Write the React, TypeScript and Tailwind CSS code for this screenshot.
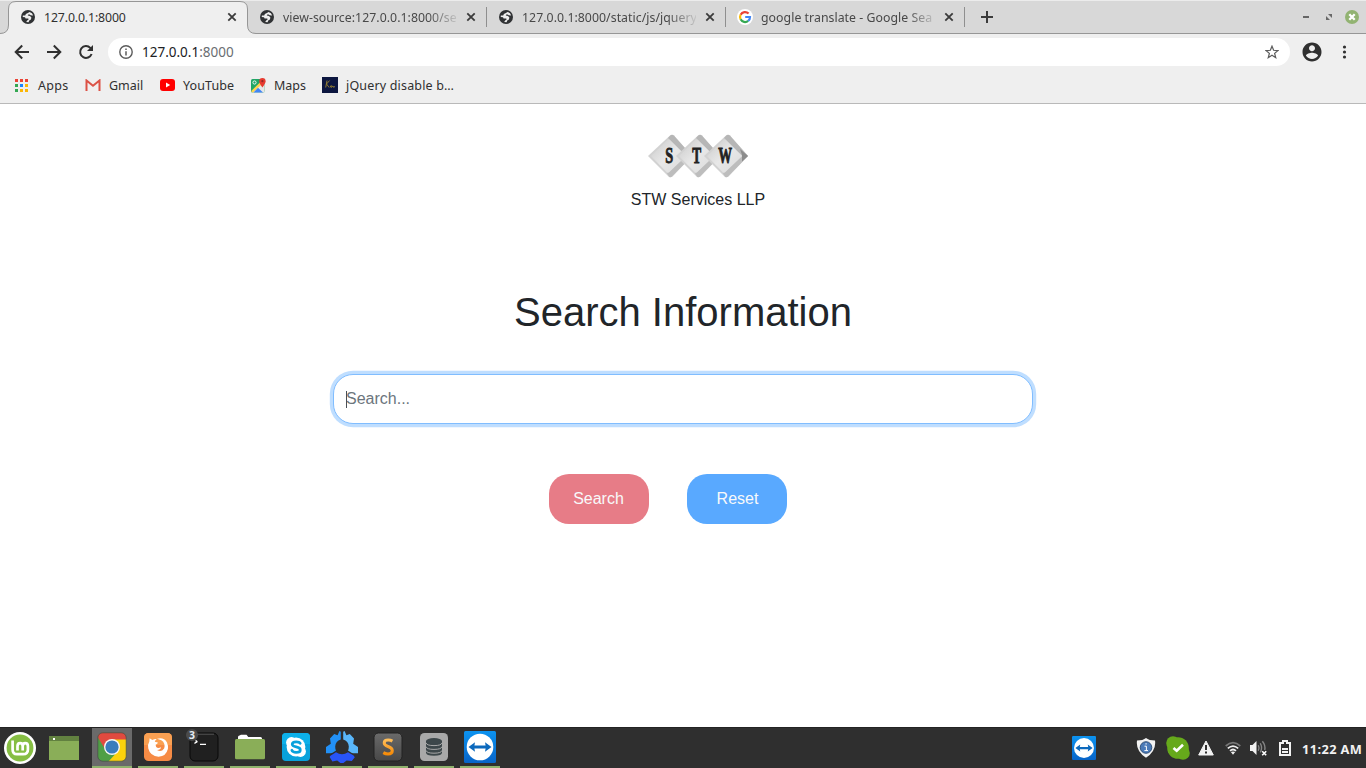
import type { ReactNode } from 'react';

const Globe = () => (
  <svg width="14" height="14" viewBox="0 0 14 14" className="shrink-0">
    <circle cx="7" cy="7" r="7" fill="#303234" />
    <path d="M8.6 2 Q11.4 2.6 12.2 5.4 L9.6 5.2 L8.8 4.4 L7.2 4.4 L6.8 5.6 L9 6 L10.4 7.6 L9.9 9.6 L8.2 10.4 L7.6 12.2 L5.2 12 L6.2 10.4 L7.6 9.6 L7.3 8.6 L4.6 8.4 L4 7.2 L1.7 7 L1.9 5.6 L4.2 5.6 L4.9 3.9 L6.9 3.1 Z" fill="#eeeeee" />
  </svg>
);

const GoogleG = () => (
  <svg width="16" height="16" viewBox="0 0 16 16" className="-mx-px shrink-0">
    <circle cx="8" cy="8" r="8" fill="#fff" />
    <g fill="none" strokeWidth="2.2">
      <path d="M11.6 4.6 A5 5 0 0 0 3.6 5.7" stroke="#ea4335" />
      <path d="M3.6 5.7 A5 5 0 0 0 3.6 10.3" stroke="#fbbc05" />
      <path d="M3.6 10.3 A5 5 0 0 0 11.2 11.9" stroke="#34a853" />
      <path d="M11.2 11.9 A5 5 0 0 0 13 8 H8.2" stroke="#4285f4" />
    </g>
  </svg>
);

const CloseX = () => (
  <svg width="10" height="10" viewBox="0 0 10 10" className="ml-[9px] shrink-0">
    <path d="M1.3 1.3 L8.7 8.7 M8.7 1.3 L1.3 8.7" stroke="#3b3b3b" strokeWidth="1.8" />
  </svg>
);

function Tab({ icon, title, active }: { icon: ReactNode; title: string; active?: boolean }) {
  return (
    <div className="relative flex h-[34px] w-[239px] shrink-0 items-center pl-[13px]">
      {icon}
      <div
        className={
          'ml-[9px] w-[174px] overflow-hidden whitespace-nowrap pt-px text-[12.3px] leading-[18px] ' +
          (active
            ? 'tracking-[-0.13px] text-[#303030]'
            : 'tracking-[0.04px] text-[#484848] [mask-image:linear-gradient(to_right,black_145px,transparent_178px)]')
        }
      >
        {title}
      </div>
      <CloseX />
      {!active && <div className="-mr-px ml-auto h-5 w-px bg-[#8f8f8f]" />}
    </div>
  );
}

const TeamViewer = ({ size }: { size: number }) => (
  <svg width={size} height={size} viewBox="0 0 32 32">
    <defs>
      <linearGradient id="tv" x1="0" y1="0" x2="0" y2="1">
        <stop offset="0" stopColor="#0c93f0" />
        <stop offset="1" stopColor="#0764c8" />
      </linearGradient>
    </defs>
    <rect width="32" height="32" rx="1.5" fill="url(#tv)" />
    <circle cx="16" cy="16" r="13.3" fill="#fff" />
    <path d="M4.5 16 L11 11.2 L10.4 14.5 H21.6 L21 11.2 L27.5 16 L21 20.8 L21.6 17.5 H10.4 L11 20.8 Z" fill="#0c69bd" />
  </svg>
);

function Task({ children, active }: { children: ReactNode; active?: boolean }) {
  return (
    <div
      className={
        'relative mr-1.5 flex h-10 w-10 items-center justify-center border-b-2 border-[#8fb26d] ' +
        (active ? 'bg-[#6a6a6a]' : '')
      }
    >
      {children}
    </div>
  );
}

const Mint = () => (
  <svg width="32" height="32" viewBox="0 0 32 32">
    <circle cx="16" cy="16" r="16" fill="#fff" />
    <circle cx="16" cy="16" r="13.4" fill="#86be43" />
    <path d="M8.6 8.5 V17.5 Q8.6 22.2 13 22.2 H19.2 Q23.9 22.2 23.9 17.5 V14.2 Q23.9 11.2 21.3 11.2 Q18.7 11.2 18.7 14.2 V18.4 M18.7 14.2 Q18.7 11.2 16.1 11.2 Q13.5 11.2 13.5 14.2 V18.4" fill="none" stroke="#fff" strokeWidth="2.7" />
  </svg>
);

const ShowDesktop = () => (
  <svg width="30" height="24" viewBox="0 0 30 24">
    <rect width="30" height="24" fill="#8aae58" />
    <rect width="30" height="5" fill="#628140" />
    <rect x="4" y="2" width="2" height="2" fill="#fff" />
  </svg>
);

const Chrome = () => (
  <svg width="30" height="30" viewBox="0 0 30 30">
    <clipPath id="cr"><rect x=".8" y=".8" width="28.4" height="28.4" rx="5" /></clipPath>
    <g clipPath="url(#cr)">
      <rect width="30" height="30" fill="#4f9f45" />
      <path d="M15 7 H30 V30 H11 L22 18 Z" fill="#fbd20c" />
      <path d="M0 0 H30 V7.5 H15 L8 17 L0 4 Z" fill="#e04a3f" />
      <circle cx="15" cy="15" r="8" fill="#f5f5f5" />
      <circle cx="15" cy="15" r="6.6" fill="#397dbc" />
    </g>
    <rect x=".8" y=".8" width="28.4" height="28.4" rx="5" fill="none" stroke="#454545" strokeOpacity=".65" />
  </svg>
);

const Firefox = () => (
  <svg width="30" height="30" viewBox="0 0 30 30">
    <rect x="1" y="1" width="28" height="28" rx="4.5" fill="#f68b45" />
    <path d="M1 6 Q1 1 6 1 H24 Q29 1 29 6 V13 H1 Z" fill="#faa052" />
    <path d="M6.6 6.2 L9.4 8.1 Q11.7 6.8 13.7 7.2 Q11.8 8.2 11.8 9.8 L14.9 10.5 Q14.8 12 12.6 12.8 L13.2 15.1 Q15 16.8 18 15.3 Q17.6 18.1 14 18 Q18.2 20.6 21.1 16.5 Q22.5 13 20 9.2 Q25.7 12 24.8 17 Q23.3 24.2 15.6 24.7 Q7.2 24.2 5.3 16.5 Q4.6 12.2 6.3 9.6 Z" fill="#fff" />
    <path d="M14 6.8 Q20.6 4.6 24 10.4 Q25.7 14 24.4 18 Q23.4 11.2 18.3 8.3 Z" fill="#fff" />
  </svg>
);

const Terminal = () => (
  <svg width="30" height="30" viewBox="0 0 30 30">
    <rect x="1" y="1" width="28" height="28" rx="5" fill="#202020" stroke="#080808" />
    <path d="M5 2.2 H25" stroke="#555" />
    <path d="M5.5 11.5 L8.4 9 M6.8 8.2 L8 10.6 M11 12.3 H17" fill="none" stroke="#fff" strokeWidth="1.3" />
  </svg>
);

const Folder = () => (
  <svg width="30" height="26" viewBox="0 0 30 26" className="mb-px">
    <path d="M3 6 V3 Q3 1.5 4.5 1.5 L6 .8 H11.5 L13.3 3 H25.5 Q27 3 27 4.5 V6 Z" fill="#fff" />
    <rect y="5" width="30" height="20.3" rx="1.5" fill="#8aae58" />
  </svg>
);

const Skype = () => (
  <svg width="30" height="30" viewBox="0 0 30 30">
    <rect x="1" y="1" width="28" height="28" rx="4" fill="#08a2dc" />
    <path d="M1 5 Q1 1 5 1 H25 Q29 1 29 5 V12 H1 Z" fill="#0db0e9" />
    <circle cx="15" cy="15" r="9.4" fill="#fff" />
    <circle cx="10.5" cy="10.5" r="5.4" fill="#fff" />
    <circle cx="19.5" cy="19.5" r="5.4" fill="#fff" />
    <path d="M19.2 11.3 Q18.4 9.8 15.2 9.8 Q11.2 9.8 11.2 12.3 Q11.2 14.1 15.2 14.9 Q19.3 15.7 19.3 17.9 Q19.3 20.4 15.2 20.4 Q11.5 20.4 10.8 18.2" fill="none" stroke="#08a2dc" strokeWidth="2.7" strokeLinecap="round" />
  </svg>
);

const Hubstaff = () => (
  <svg width="32" height="32" viewBox="0 0 32 32">
    <path d="M13.4 0 L14.8 .8 V8.6 Q9.6 10.2 9.2 15.5 Q9.2 18 10 19.6 L6.6 21.8 L5 22.2 H0 V16 L4.8 12.8 L4 7.4 L8.2 3 L11.6 4.2 Z" fill="#2291f7" />
    <path d="M18.6 0 L17.2 .8 V8.6 Q22.4 10.2 22.8 15.5 Q22.8 18 22 19.6 L25.4 21.8 L27 22.2 H32 V16 L27.2 12.8 L28 7.4 L23.8 3 L20.4 4.2 Z" fill="#59b7fb" />
    <path d="M3.6 26 L4.4 24.8 L10 21.2 Q16 25.4 22 21.2 L27.6 24.6 L28.8 26.2 L25.8 30 L20.6 29.6 L17.4 32 H14.4 L11.2 29.5 L6.4 30.6 Z" fill="#2855f8" />
  </svg>
);

const Sublime = () => (
  <svg width="30" height="30" viewBox="0 0 30 30">
    <defs>
      <linearGradient id="sub" x1="0" y1="0" x2="0" y2="1"><stop stopColor="#6a6a6a" /><stop offset="1" stopColor="#484848" /></linearGradient>
      <linearGradient id="so" x1="0" y1="0" x2="0" y2="1"><stop stopColor="#ffbd58" /><stop offset="1" stopColor="#f68b08" /></linearGradient>
    </defs>
    <rect x="1" y="1" width="28" height="28" rx="4.5" fill="url(#sub)" stroke="#222" />
    <path d="M19.4 9.1 Q17.7 8.1 15.2 8.1 Q11.2 8.1 11.2 11 Q11.2 13.2 15 14.5 Q19.3 16 19.3 18.7 Q19.3 21.9 15 21.9 Q12.4 21.9 10.3 20.6" fill="none" stroke="url(#so)" strokeWidth="3" />
  </svg>
);

const Database = () => (
  <svg width="30" height="30" viewBox="0 0 30 30">
    <rect x="1" y="1" width="28" height="28" rx="4.5" fill="#a9a9a9" />
    <path d="M7 9 V20.5 Q7 23.8 15 23.8 Q23 23.8 23 20.5 V9 Z" fill="#3d474a" />
    <ellipse cx="15" cy="9" rx="8" ry="2.9" fill="#3d474a" />
    <path d="M7 10.8 Q7.5 13.6 15 13.6 Q22.5 13.6 23 10.8 M7 14.6 Q7.5 17.4 15 17.4 Q22.5 17.4 23 14.6 M7 18.4 Q7.5 21.2 15 21.2 Q22.5 21.2 23 18.4" fill="none" stroke="#a9a9a9" strokeWidth="1" />
  </svg>
);

const Logo = () => (
  <svg width="100" height="44" viewBox="0 0 100 44" className="block">
    <defs>
      <linearGradient id="tile" x1="0" y1="0" x2="1" y2="1"><stop stopColor="#c9c9c9" /><stop offset=".5" stopColor="#e8e8e8" /><stop offset="1" stopColor="#dadada" /></linearGradient>
    </defs>
    {[0, 28, 56].map((x, i) => (
      <g key={x} transform={`translate(${x} 0)`}>
        <path d="M0 22 L22 1.5 Q24 0 26 1.5 L44 22 L24.5 42.5 Q22.5 44 20.5 42.5 Z" fill="#d2d2d2" />
        <path d="M20 4 L22.6 1.2 Q24 0 25.8 1.4 L44 22 L38.5 22 Z" fill="#b6b6b6" />
        <path d="M38.5 22 L44 22 L24 42.5 Q22.5 44 21 42.8 L19 39.5 Z" fill="#bdbdbd" />
        {i === 2 && <path d="M36 15 L44 22 L38 27.5 L38 21 Z" fill="#8c8c8c" />}
        <path d="M3 22 L19.6 6 Q21 5 22.4 6.4 L38 22 L21.4 38 Q20 39.4 18.6 38 Z" fill="url(#tile)" />
      </g>
    ))}
    <g fill="#222" fontFamily="Liberation Serif, serif" fontWeight="700" fontSize="23" textAnchor="middle" stroke="#222" strokeWidth=".9">
      <text transform="translate(21.3 29.4) scale(.62 1)">S</text>
      <text transform="translate(48.7 29.4) scale(.58 1)">T</text>
      <text transform="translate(77.2 29.4) scale(.6 1)">W</text>
    </g>
  </svg>
);

export default function App() {
  return (
    <div className="flex h-[768px] w-[1366px] flex-col overflow-hidden bg-white font-['Noto_Sans',sans-serif]">
      <header className="h-[104px] shrink-0 border-b border-[#b9b9b9] bg-[#efefef]">
        <div className="relative flex h-[34px] items-center border-b border-[#969696] border-t border-t-[#ececec] bg-[#d8d8d8] pl-2">
          <svg width="256" height="34" viewBox="0 0 256 34" className="absolute -top-px left-0">
            <path d="M0 34 V33.5 Q8.5 33.5 8.5 25 V9 Q8.5 1.5 16 1.5 H240 Q247.5 1.5 247.5 9 V25 Q247.5 33.5 256 33.5 V34 Z" fill="#efefef" />
            <path d="M0 33.5 Q8.5 33.5 8.5 25 V9 Q8.5 1.5 16 1.5 H240 Q247.5 1.5 247.5 9 V25 Q247.5 33.5 256 33.5" fill="none" stroke="#969696" />
          </svg>
          <Tab active icon={<Globe />} title="127.0.0.1:8000" />
          <Tab icon={<Globe />} title="view-source:127.0.0.1:8000/sea" />
          <Tab icon={<Globe />} title="127.0.0.1:8000/static/js/jquery-" />
          <Tab icon={<GoogleG />} title="google translate - Google Sea" />
          <svg width="12" height="12" viewBox="0 0 12 12" className="ml-[17px]"><path d="M6 0 V12 M0 6 H12" stroke="#3b3b3b" strokeWidth="2" /></svg>
          <div className="ml-auto mr-[7px] flex items-center">
            <div className="mr-4 h-0.5 w-1.5 bg-[#666]" />
            <svg width="8" height="8" viewBox="0 0 8 8" className="mr-3"><path d="M3 1 H7 V5 Z M1 3 V7 H5 Z" fill="#686868" /></svg>
            <svg width="14" height="14" viewBox="0 0 14 14"><circle cx="7" cy="7" r="7" fill="#92b372" /><path d="M4.3 4.3 L9.7 9.7 M9.7 4.3 L4.3 9.7" stroke="#fff" strokeWidth="2.3" /></svg>
          </div>
        </div>
        <div className="flex h-9 items-center">
          <svg width="92" height="20" viewBox="0 0 92 20" className="ml-2 mr-2 shrink-0" fill="none" stroke="#303030" strokeWidth="2">
            <path d="M21 10 H8.5 M14.2 3.5 L7.7 10 L14.2 16.5" />
            <path d="M39 10 H51.5 M45.8 3.5 L52.3 10 L45.8 16.5" />
            <path d="M83.6 12 A5.9 5.9 0 1 1 82.3 5.9 L84 7.6" />
            <path d="M85 3 V9 H79 Z" fill="#303030" stroke="none" />
          </svg>
          <div className="flex h-7 w-[1182px] items-center rounded-full bg-white pl-[11px] pr-[11px]">
            <svg width="14" height="14" viewBox="0 0 14 14"><circle cx="7" cy="7" r="6.2" fill="none" stroke="#5c5c5c" strokeWidth="1.4" /><path d="M7 6.2 V10.4 M7 3.5 V5" stroke="#5c5c5c" strokeWidth="1.5" /></svg>
            <div className="ml-[9px] text-[13.5px] leading-5 text-[#202124]">127.0.0.1<span className="text-[#6a6e72]">:8000</span></div>
            <svg width="14" height="14" viewBox="0 0 24 24" className="ml-auto"><path d="M12 2 L14.8 9 L22.3 9.5 L16.5 14.4 L18.4 21.7 L12 17.7 L5.6 21.7 L7.5 14.4 L1.7 9.5 L9.2 9 Z" fill="none" stroke="#5c5c5c" strokeWidth="2.1" /></svg>
          </div>
          <svg width="20" height="20" viewBox="2 2 20 20" className="ml-3"><path fill="#303030" d="M12 2.5C6.76 2.5 2.5 6.76 2.5 12s4.26 9.5 9.5 9.5 9.5-4.26 9.5-9.5S17.24 2.5 12 2.5zm0 2.7c1.66 0 3 1.34 3 3s-1.34 3-3 3-3-1.34-3-3 1.34-3 3-3zm0 13.8c-2.5 0-4.71-1.28-6-3.22.03-1.99 4-3.08 6-3.08 1.99 0 5.97 1.09 6 3.08-1.29 1.94-3.5 3.22-6 3.22z" /></svg>
          <svg width="5" height="14" viewBox="0 0 5 14" className="ml-5" fill="#303030"><circle cx="2.5" cy="2" r="1.6" /><circle cx="2.5" cy="7" r="1.6" /><circle cx="2.5" cy="12" r="1.6" /></svg>
        </div>
        <nav className="flex h-[31px] items-center pl-[15px] text-[12.5px] leading-[18px] text-[#303030]">
          <svg width="13" height="13" viewBox="0 0 13 13" className="-mt-px">
            <g fill="#ea4335"><path d="M0 0h3v3H0zM5 0h3v3H5zM10 0h3v3h-3z" /></g>
            <path d="M0 5h3v3H0zM0 10h3v3H0z" fill="#34a853" />
            <path d="M5 5h3v3H5z" fill="#1a84ff" />
            <path d="M10 5h3v3h-3zM5 10h3v3H5zM10 10h3v3h-3z" fill="#fbb606" />
          </svg>
          <div className="ml-[10px] w-[47px] tracking-[0.3px]">Apps</div>
          <svg width="16" height="12" viewBox="0 0 16 12" className="-mt-px"><rect x="1" y=".5" width="14" height="11" fill="#f2eeee" /><path d="M1.5 12 V1.5 L8 6.8 L14.5 1.5 V12" fill="none" stroke="#dc5145" strokeWidth="2" /></svg>
          <div className="ml-2 w-[51px]">Gmail</div>
          <svg width="15" height="12" viewBox="0 0 15 12" className="-mt-px"><rect width="15" height="12" rx="3" fill="#f00" /><path d="M6 3.4 L10.2 6 L6 8.6Z" fill="#fff" /></svg>
          <div className="ml-2 w-[68px] tracking-[0.1px]">YouTube</div>
          <svg width="15" height="15" viewBox="0 0 15 15" className="-mt-px">
            <rect y="1" width="13.5" height="13.5" rx="1.5" fill="#22a566" />
            <path d="M1 14.5 L13.5 3 V14.5Z" fill="#e7e7e7" />
            <path d="M0 13.2 L11 2.5 L13 4.2 L2 14.5Z" fill="#ffd44f" />
            <path d="M2.5 14.5 L7 9.7 L12 14.5Z" fill="#4285f4" />
            <circle cx="3.5" cy="4.5" r="1.6" fill="none" stroke="#fff" strokeWidth=".9" />
            <path d="M11.4 9.4 Q8.2 5.3 8.2 3.2 A3.2 3.2 0 0 1 14.6 3.2 Q14.6 5.3 11.4 9.4Z" fill="#e63b30" /><circle cx="11.4" cy="3.2" r="1.1" fill="#912a25" />
          </svg>
          <div className="ml-2 w-12">Maps</div>
          <svg width="16" height="16" viewBox="0 0 16 16" className="-mt-0.5"><rect width="16" height="16" fill="#0c1640" /><path d="M5 3.5 L3.7 10.5 M7.6 3.5 L4.5 7 L7.2 10.5 M8 10 L9.2 8.5 L9 10.5 L11 9 L11.5 10.3 L13 9.5" fill="none" stroke="#9b8430" strokeWidth=".9" /></svg>
          <div className="ml-2 tracking-[0.17px]">jQuery disable b…</div>
        </nav>
      </header>

      <main className="flex min-h-0 flex-1 flex-col items-center pt-[30px] font-['Liberation_Sans',sans-serif] text-base text-[#212529]">
        <div className="ml-[30px] flex flex-col items-center">
          <Logo />
          <div className="mt-[10px] leading-6">STW Services LLP</div>
        </div>
        <h1 className="mt-[76px] text-[40px] leading-[48px]">Search Information</h1>
        <div className="relative mt-[38px]">
          <input
            placeholder="Search..."
            className="block h-[50px] w-[700px] rounded-[20px] border border-[#80bdff] bg-white px-3 leading-6 shadow-[0_0_0_3.2px_rgba(0,123,255,0.25)] outline-none placeholder:text-[#6c757d]"
          />
          <div className="absolute left-[13px] top-[17px] h-[17px] w-px bg-[#495057]" />
        </div>
        <div className="mr-[30px] mt-[50px] flex gap-[38px] text-[#f8f9fa]">
          <button className="h-[50px] w-[100px] rounded-[20px] bg-[#e77c87] pr-px">Search</button>
          <button className="h-[50px] w-[100px] rounded-[20px] bg-[#59a9ff] pl-px">Reset</button>
        </div>
      </main>

      <footer className="flex h-[41px] shrink-0 items-center border-t border-[#232323] bg-[#2f2f2f] pl-1">
        <Mint />
        <div className="ml-[13px] mr-[13px]"><ShowDesktop /></div>
        <Task active><Chrome /></Task>
        <Task><Firefox /></Task>
        <Task>
          <Terminal />
          <div className="absolute left-0.5 top-px flex h-3 w-3 items-center justify-center rounded-full bg-[#4b4b4b] text-[10.5px] font-bold leading-3 text-[#e4edf5]">3</div>
        </Task>
        <Task><Folder /></Task>
        <Task><Skype /></Task>
        <Task><Hubstaff /></Task>
        <Task><Sublime /></Task>
        <Task><Database /></Task>
        <Task><TeamViewer size={32} /></Task>
        <div className="ml-auto flex items-center">
          <TeamViewer size={24} />
          <svg width="20" height="20" viewBox="0 0 20 20" className="ml-10"><path d="M10 0 Q13 2.5 19 2.5 Q20.5 13 10 19.8 Q-.5 13 1 2.5 Q7 2.5 10 0 Z" fill="#f3f3f3" /><circle cx="10" cy="9.5" r="5.8" fill="#4a7ab8" stroke="#24456f" strokeWidth=".9" /><path d="M8.5 8.2 H10.4 V12.6 M8.4 12.6 H12 M9.4 5.9 H10.8" fill="none" stroke="#fff" strokeWidth="1" /></svg>
          <svg width="24" height="24" viewBox="0 0 24 24" className="ml-2.5"><circle cx="12" cy="12" r="10.8" fill="#66a91b" /><circle cx="7" cy="7" r="6.8" fill="#66a91b" /><circle cx="17" cy="17" r="6.8" fill="#66a91b" /><path d="M7.5 12 L10.7 14.8 L17 8.8" fill="none" stroke="#fff" strokeWidth="2.6" /></svg>
          <svg width="16" height="16" viewBox="0 0 16 16" className="ml-2"><path d="M8 1 L15.3 15 H.7Z" fill="#f2f2f2" stroke="#f2f2f2" strokeLinejoin="round" /><path d="M8 5 V10 M8 11.5 V13.5" stroke="#2f2f2f" strokeWidth="2" /></svg>
          <svg width="16" height="14" viewBox="0 0 16 14" className="ml-[11px]" fill="none" strokeWidth="1.7"><path d="M.7 5 Q8 -1.6 15.3 5" stroke="#777" /><path d="M2.8 7.4 Q8 2.8 13.2 7.4" stroke="#eee" /><path d="M5 9.8 Q8 7.2 11 9.8" stroke="#eee" /><path d="M8 13.8 L5.8 11 Q8 9.8 10.2 11Z" fill="#eee" stroke="none" /></svg>
          <svg width="17" height="16" viewBox="0 0 17 16" className="ml-[9px]"><path d="M0 5 H2.5 L6.5 1 V15 L2.5 11 H0Z" fill="#f2f2f2" /><path d="M8.3 5.3 Q9.7 8 8.3 10.7 M10.3 3.2 Q12.8 8 10.3 12.4 M12.4 1.2 Q15.8 5.5 14.7 10" fill="none" stroke="#858585" strokeWidth="1.4" /><path d="M12.2 11.2 L16.2 15.2 M16.2 11.2 L12.2 15.2" stroke="#fff" strokeWidth="1.6" /></svg>
          <svg width="12" height="16" viewBox="0 0 12 16" className="ml-3"><path d="M1 3 H4 V1 H8 V3 H11 V15 H1Z" fill="none" stroke="#f2f2f2" strokeWidth="2" /><path d="M3 9 H9 M3 12 H9" stroke="#f2f2f2" strokeWidth="1.8" /></svg>
          <div className="ml-[11px] w-16 whitespace-nowrap pt-0.5 text-[12.8px] font-bold leading-[18px] tracking-[0.4px] text-[#f2f2f2]">11:22 AM</div>
        </div>
      </footer>
    </div>
  );
}
